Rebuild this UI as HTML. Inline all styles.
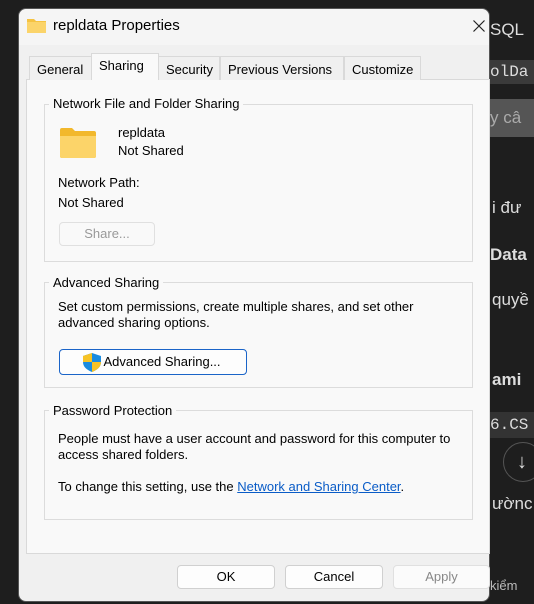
<!DOCTYPE html>
<html><head><style>
*{margin:0;padding:0;box-sizing:border-box}
body{width:534px;height:604px;background:#1e1e1e;font-family:"Liberation Sans",sans-serif;font-size:13px;color:#000;position:relative;overflow:hidden}
.a{position:absolute}
.dlg{left:18px;top:8px;width:472px;height:594px;background:#f0f0f0;border-radius:8px;border:1px solid #555}
.tab{position:absolute;top:56px;height:24px;background:#f0f0f0;border:1px solid #d9d9d9;border-bottom:none;padding:5px 7px 0;font-size:13px}
.grp{position:absolute;left:44px;width:429px;border:1px solid #dcdcdc}
.gt{position:absolute;background:#f9f9f9;padding:0 4px;left:49px;font-size:13px}
.btn{position:absolute;height:24px;border:1px solid #d0d0d0;background:#fdfdfd;border-radius:4px;text-align:center;line-height:22px}
</style></head><body>
<div class="a" style="left:490px;top:20px;color:#ddd;font-size:17px">SQL</div>
<div class="a" style="left:490px;top:60px;width:44px;height:24px;background:#3a3a3a;color:#ddd;font-family:'Liberation Mono';font-size:16px;line-height:24px">olDa</div>
<div class="a" style="left:490px;top:99px;width:44px;height:38px;background:#555;color:#aaa;font-size:17px;line-height:38px">y câ</div>
<div class="a" style="left:492px;top:198px;color:#ddd;font-size:17px">i đư</div>
<div class="a" style="left:490px;top:245px;color:#ddd;font-size:17px;font-weight:bold">Data</div>
<div class="a" style="left:492px;top:290px;color:#ddd;font-size:17px">quyề</div>
<div class="a" style="left:492px;top:370px;color:#ddd;font-size:17px;font-weight:bold">ami</div>
<div class="a" style="left:490px;top:412px;width:44px;height:26px;background:#333;color:#ddd;font-family:'Liberation Mono';font-size:16px;line-height:26px">6.CS</div>
<div class="a" style="left:503px;top:442px;width:40px;height:40px;border:1px solid #555;border-radius:50%;color:#ddd;font-size:20px;line-height:38px;padding-left:13px">↓</div>
<div class="a" style="left:492px;top:494px;color:#ddd;font-size:17px">ườnc</div>
<div class="a" style="left:490px;top:578px;color:#bbb;font-size:13px">kiểm</div>

<div class="a dlg"></div>
<div class="a" style="left:19px;top:9px;width:470px;height:36px;background:#f5f5f5;border-radius:8px 8px 0 0"></div>
<svg class="a" style="left:27px;top:17px" width="19" height="16"><path d="M0 2h7l2 2h10v12H0z" fill="#f5c342"/><path d="M0 5h19v11H0z" fill="#fbd46a"/></svg>
<div class="a" style="left:53px;top:17px;font-size:15px">repldata Properties</div>
<svg class="a" style="left:473px;top:20px" width="12" height="12"><path d="M0.5 0.5l11 11M11.5 0.5l-11 11" stroke="#222" stroke-width="1.2"/></svg>

<div class="a" style="left:26px;top:79px;width:464px;height:475px;background:#f9f9f9;border:1px solid #d9d9d9"></div>
<div class="tab" style="left:29px;width:63px">General</div>
<div class="tab" style="left:91px;top:53px;height:27px;width:68px;background:#f9f9f9;padding-top:4px;z-index:2">Sharing</div>
<div class="tab" style="left:158px;width:62px">Security</div>
<div class="tab" style="left:220px;width:124px">Previous Versions</div>
<div class="tab" style="left:344px;width:77px">Customize</div>

<div class="grp" style="top:104px;height:158px"></div>
<div class="gt" style="top:96px">Network File and Folder Sharing</div>
<svg class="a" style="left:60px;top:128px" width="36" height="30"><path d="M0 2q0-2 2-2h10l3 3h19q2 0 2 2v23q0 2-2 2H2q-2 0-2-2z" fill="#f2b82c"/><path d="M0 8h36v20q0 2-2 2H2q-2 0-2-2z" fill="#fcd469"/></svg>
<div class="a" style="left:118px;top:125px">repldata</div>
<div class="a" style="left:118px;top:143px">Not Shared</div>
<div class="a" style="left:58px;top:175px">Network Path:</div>
<div class="a" style="left:58px;top:195px">Not Shared</div>
<div class="btn" style="left:59px;top:222px;width:96px;color:#999;background:#f9f9f9;border-color:#e0e0e0">Share...</div>

<div class="grp" style="top:282px;height:106px"></div>
<div class="gt" style="top:275px">Advanced Sharing</div>
<div class="a" style="left:58px;top:299px;line-height:16px">Set custom permissions, create multiple shares, and set other<br>advanced sharing options.</div>
<div class="btn" style="left:59px;top:349px;width:188px;height:26px;border:1px solid #1a64c8;line-height:24px;padding-left:18px">Advanced Sharing...</div>
<svg class="a" style="left:82px;top:353px" width="20" height="19"><path d="M10 0l9 3v6c0 5-4 8-9 10C5 17 1 14 1 9V3z" fill="#1b8ce0"/><path d="M10 0v9H1V3zM10 9h9c0 5-4 8-9 10z" fill="#f7c325"/></svg>

<div class="grp" style="top:410px;height:110px"></div>
<div class="gt" style="top:403px">Password Protection</div>
<div class="a" style="left:58px;top:431px;line-height:16px">People must have a user account and password for this computer to<br>access shared folders.</div>
<div class="a" style="left:58px;top:479px">To change this setting, use the <span style="color:#0a5cc7;text-decoration:underline">Network and Sharing Center</span>.</div>

<div class="btn" style="left:177px;top:565px;width:98px">OK</div>
<div class="btn" style="left:285px;top:565px;width:98px">Cancel</div>
<div class="btn" style="left:393px;top:565px;width:97px;color:#888;border-color:#e0e0e0;background:#fbfbfb">Apply</div>
</body></html>
